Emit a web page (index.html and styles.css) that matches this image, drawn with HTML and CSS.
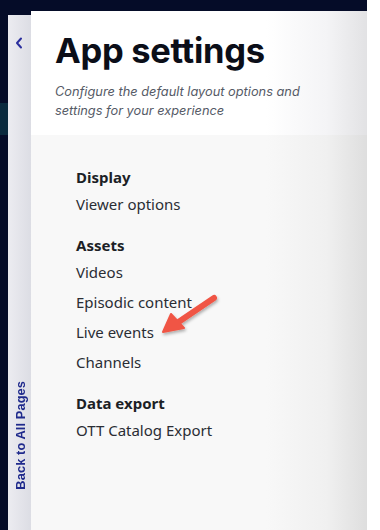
FILE: index.html
```html
<!DOCTYPE html>
<html>
<head>
<meta charset="utf-8">
<link rel="stylesheet" href="styles.css">
</head>
<body>
<div class="screen">
  <div class="edge">
    <div class="edge-teal"></div>
  </div>
  <aside class="side">
    <svg class="chev" width="8" height="12" viewBox="0 0 8 12"><path d="M6 1.5 L2 6 L6 10.5" fill="none" stroke="#2b2f9e" stroke-width="2" stroke-linecap="round" stroke-linejoin="round"/></svg>
    <span class="back">Back to All Pages</span>
  </aside>
  <main class="panel">
    <header class="head">
      <h1 class="title">App settings</h1>
      <p class="sub">Configure the default layout options and settings for your experience</p>
    </header>
    <section class="body">
      <div class="group">
        <h2 class="gh">Display</h2>
        <div class="item">Viewer options</div>
      </div>
      <div class="group">
        <h2 class="gh">Assets</h2>
        <div class="item">Videos</div>
        <div class="item">Episodic content</div>
        <div class="item">Live events</div>
        <div class="item">Channels</div>
      </div>
      <div class="group">
        <h2 class="gh">Data export</h2>
        <div class="item">OTT Catalog Export</div>
      </div>
      <svg class="arrow" width="70" height="50" viewBox="0 0 70 50">
        <defs>
          <filter id="sh" x="-20%" y="-20%" width="150%" height="150%">
            <feDropShadow dx="1" dy="2" stdDeviation="1.5" flood-color="#000" flood-opacity="0.3"/>
          </filter>
        </defs>
        <g filter="url(#sh)">
          <line x1="57" y1="8" x2="20" y2="33" stroke="#f05545" stroke-width="6" stroke-linecap="round"/>
          <path d="M6 42 L14 24 L27 38 Z" fill="#f05545" stroke="#f05545" stroke-width="2" stroke-linejoin="round"/>
        </g>
      </svg>
    </section>
  </main>
  <div class="right"></div>
</div>
</body>
</html>
```
FILE: styles.css
```css
* { box-sizing: border-box; }
html, body { margin: 0; padding: 0; }
body {
  width: 380px;
  height: 530px;
  overflow: hidden;
  background: #050c28;
  font-family: "Noto Sans", "Liberation Sans", sans-serif;
}
.screen {
  display: flex;
  height: 530px;
}
.edge {
  width: 8px;
  flex: none;
  padding-top: 103px;
}
.edge-teal {
  height: 32px;
  background: #0a2a3e;
}
.side {
  width: 23px;
  flex: none;
  margin-top: 15px;
  background: linear-gradient(to right, #ececf1, #dcdde4);
  display: flex;
  flex-direction: column;
  align-items: center;
  justify-content: space-between;
  padding: 22px 0 40px;
}
.chev { display: block; margin-left: -1px; }
.back {
  writing-mode: vertical-rl;
  transform: rotate(180deg);
  font-family: "Liberation Sans", Arial, sans-serif;
  font-weight: 700;
  font-size: 12.8px;
  color: #1f2a8c;
  letter-spacing: 0.1px;
  margin-left: 1px;
}
.panel {
  width: 336px;
  flex: none;
  margin-top: 11px;
  display: flex;
  flex-direction: column;
}
.head {
  height: 124px;
  padding: 20px 0 0 24px;
  background: linear-gradient(to right, #ffffff 70%, #f4f4f6 88%, #e2e2e4 100%);
}
.title {
  margin: 0;
  font-family: "Inter", "Liberation Sans", sans-serif;
  font-weight: 700;
  font-size: 34.5px;
  line-height: 40px;
  color: #0b0e18;
  letter-spacing: -0.3px;
}
.sub {
  margin: 11px 0 0;
  font-family: "Inter", "Liberation Sans", sans-serif;
  font-style: italic;
  font-size: 12.8px;
  line-height: 19px;
  color: #555a66;
  width: 260px;
}
.body {
  flex: 1;
  position: relative;
  padding: 31px 0 0 45px;
  background: linear-gradient(to right, #f8f8f8 70%, #f0f0f0 88%, #dedede 100%);
  display: flex;
  flex-direction: column;
  gap: 19px;
}
.group {
  display: flex;
  flex-direction: column;
}
.gh {
  margin: 0;
  font-size: 15px;
  font-weight: 700;
  line-height: 22px;
  color: #1c1f26;
}
.item {
  font-size: 15px;
  line-height: 22px;
  margin-top: 8px;
  color: #2a2d34;
}
.gh + .item { margin-top: 5px; }
.arrow {
  position: absolute;
  left: 126px;
  top: 155px;
}
.right {
  flex: 1;
  background: #ffffff;
}
```
